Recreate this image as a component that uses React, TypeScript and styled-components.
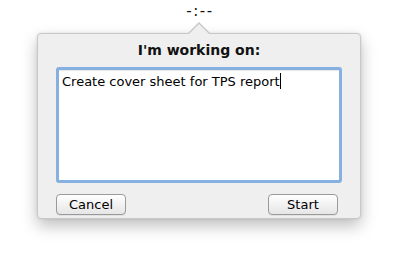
import * as React from "react";
import styled, { createGlobalStyle } from "styled-components";

const GlobalStyle = createGlobalStyle`
  html, body {
    margin: 0;
    padding: 0;
    background: #ffffff;
  }
  body {
    font-family: "DejaVu Sans", "Liberation Sans", sans-serif;
    color: #000;
  }
`;

export const Screen = styled("div")`
  width: 398px;
  height: 260px;
  display: flex;
  flex-direction: column;
  align-items: flex-start;
`;

export const Clock = styled("div")`
  align-self: center;
  margin-top: 4px;
  height: 18px;
  font-size: 15px;
  line-height: 15px;
  letter-spacing: 1.5px;
  padding-left: 2px;
  color: #111;
`;

export const Popover = styled("div")`
  position: relative;
  margin-left: 37px;
  margin-top: 11px;
  width: 324px;
  height: 186px;
  box-sizing: border-box;
  padding: 6px 18px 0 18px;
  background: #efefef;
  border: 1px solid #c8c8c8;
  border-radius: 4px;
  box-shadow: 0 7px 16px rgba(0, 0, 0, 0.25), 0 0 3px rgba(0, 0, 0, 0.1);
  display: flex;
  flex-direction: column;

  &::before {
    content: "";
    position: absolute;
    left: 149px;
    top: -12px;
    width: 0;
    height: 0;
    border-left: 12px solid transparent;
    border-right: 12px solid transparent;
    border-bottom: 12px solid #c8c8c8;
  }

  &::after {
    content: "";
    position: absolute;
    left: 150px;
    top: -10px;
    width: 0;
    height: 0;
    border-left: 11px solid transparent;
    border-right: 11px solid transparent;
    border-bottom: 11px solid #efefef;
  }
`;

export const Title = styled("div")`
  text-align: center;
  font-weight: bold;
  font-size: 14px;
  line-height: 20px;
  height: 20px;
  color: #111;
`;

export const TaskBox = styled("div")`
  margin-top: 7px;
  height: 104px;
  background: #ffffff;
  border: 3px solid #86b0df;
  border-radius: 3px;
  padding: 3px 3px;
  font-size: 13px;
  line-height: 17px;
  color: #000;
  box-shadow: inset 0 1px 1px rgba(0, 0, 0, 0.1);
`;

export const Caret = styled("span")`
  display: inline-block;
  width: 1px;
  height: 16px;
  background: #000;
  vertical-align: -3px;
`;

export const ButtonRow = styled("div")`
  margin-top: 11px;
  display: flex;
  justify-content: space-between;
  padding-right: 4px;
`;

export const Button = styled("button")`
  width: 70px;
  height: 21px;
  padding: 0;
  box-sizing: border-box;
  border: 1px solid #9a9a9a;
  border-radius: 4px;
  background: linear-gradient(#ffffff, #f2f2f2 50%, #e6e6e6);
  box-shadow: 0 1px 0 rgba(0, 0, 0, 0.05);
  font-family: "DejaVu Sans", "Liberation Sans", sans-serif;
  font-size: 13px;
  line-height: 19px;
  color: #000;
`;

export default function App(): JSX.Element {
  return (
    <Screen>
      <GlobalStyle />
      <Clock>-:--</Clock>
      <Popover>
        <Title>I'm working on:</Title>
        <TaskBox>
          Create cover sheet for TPS report<Caret />
        </TaskBox>
        <ButtonRow>
          <Button>Cancel</Button>
          <Button>Start</Button>
        </ButtonRow>
      </Popover>
    </Screen>
  );
}
